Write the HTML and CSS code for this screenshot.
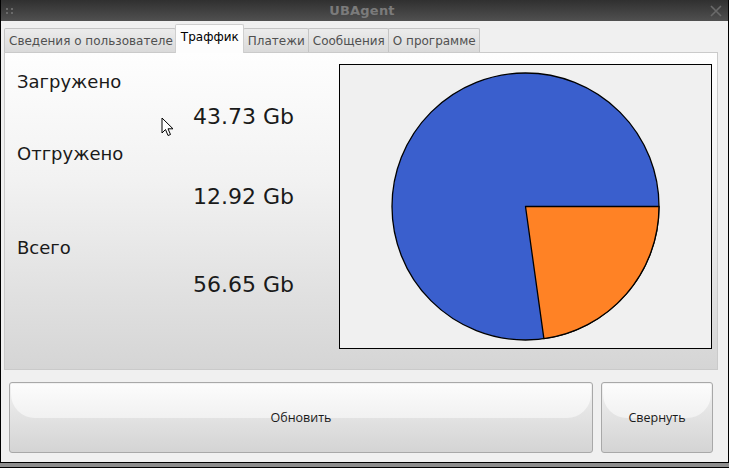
FILE: index.html
```html
<!DOCTYPE html>
<html>
<head>
<meta charset="utf-8">
<link rel="stylesheet" href="styles.css">
</head>
<body>
<div class="window">
  <div class="titlebar">
    <span class="grip"><i></i><i></i><i></i><i></i></span>
    <span class="title">UBAgent</span>
    <span class="close">
      <svg width="12" height="12" viewBox="0 0 12 12"><path d="M1 1 L11 11 M11 1 L1 11" stroke="#6a6a6a" stroke-width="1.6" fill="none"/></svg>
    </span>
  </div>
  <div class="body">
    <div class="tabs">
      <div class="tab">Сведения о пользователе</div>
      <div class="tab active">Траффик</div>
      <div class="tab">Платежи</div>
      <div class="tab">Сообщения</div>
      <div class="tab">О программе</div>
    </div>
    <div class="pane">
      <div class="stats">
        <div class="label l1">Загружено</div>
        <div class="value v1">43.73 Gb</div>
        <div class="label l2">Отгружено</div>
        <div class="value v2">12.92 Gb</div>
        <div class="label l3">Всего</div>
        <div class="value v3">56.65 Gb</div>
      </div>
      <div class="chart">
        <svg width="371" height="283" viewBox="0 0 371 283">
          <circle cx="185.5" cy="141.5" r="133.5" fill="#3a5fcd" stroke="#000" stroke-width="1.3"/>
          <path d="M185.5 141.5 L319 141.5 A133.5 133.5 0 0 1 203.9 273.7 Z" fill="#ff8225" stroke="#000" stroke-width="1.3" stroke-linejoin="round"/>
        </svg>
      </div>
      <svg class="cursor" width="14" height="21" viewBox="0 0 14 21">
        <path d="M1 1 L1 16 L4.5 12.5 L7 18.5 L9.5 17.5 L7 11.8 L12 11.8 Z" fill="#fff" stroke="#000" stroke-width="1" stroke-linejoin="round"/>
      </svg>
    </div>
    <div class="buttons">
      <button class="btn wide"><span>Обновить</span></button>
      <button class="btn narrow"><span>Свернуть</span></button>
    </div>
  </div>
  <div class="bottom"></div>
</div>
</body>
</html>
```

FILE: styles.css
```css
html, body {
  margin: 0;
  padding: 0;
  background: #f0f0f0;
}
.window {
  width: 729px;
  height: 468px;
  box-sizing: border-box;
  display: flex;
  flex-direction: column;
  font-family: "DejaVu Sans", sans-serif;
  overflow: hidden;
}
.titlebar {
  height: 21px;
  flex: none;
  background: linear-gradient(#303030, #505050);
  display: flex;
  align-items: center;
  justify-content: space-between;
  padding: 0 6px 0 5px;
  border-left: 1px solid #000;
  border-right: 1px solid #000;
  box-sizing: border-box;
}
.grip {
  width: 8px;
  display: grid;
  grid-template-columns: 3px 3px;
  gap: 2px;
}
.grip i {
  display: block;
  width: 2px;
  height: 2px;
  background: #6a6a6a;
}
.title {
  color: #7b7b7b;
  font-weight: bold;
  font-size: 13px;
  letter-spacing: 0.2px;
}
.close {
  display: flex;
  width: 12px;
  height: 12px;
}
.body {
  flex: 1;
  border-left: 1px solid #000;
  border-right: 1px solid #000;
  background: #f0f0f0;
  display: flex;
  flex-direction: column;
  padding: 3px 10px 0 3px;
}
.tabs {
  display: flex;
  align-items: flex-end;
  height: 28px;
  position: relative;
  z-index: 2;
}
.tab {
  height: 24px;
  box-sizing: border-box;
  border: 1px solid #c4c4c4;
  border-bottom: none;
  border-radius: 2px 2px 0 0;
  background: linear-gradient(#ececec, #dadada);
  color: #505050;
  font-size: 12px;
  padding: 0 3px 0 4px;
  display: flex;
  align-items: center;
  margin-right: -1px;
  white-space: nowrap;
}
.tab:first-child {
  padding: 0 2px 0 4px;
}
.tab.active {
  height: 29px;
  background: #fdfdfd;
  color: #000;
  border-color: #cfcfcf;
  padding: 0 4px 4px 5px;
  margin-bottom: -1px;
  position: relative;
  z-index: 3;
}
.pane {
  height: 318px;
  box-sizing: border-box;
  border: 1px solid #cacaca;
  background: linear-gradient(#fefefe 0%, #f2f2f2 40%, #d5d5d5 100%);
  display: flex;
  padding: 11px 0 0 12px;
  position: relative;
}
.stats {
  width: 322px;
  position: relative;
}
.label {
  font-size: 18px;
  color: #1a1a1a;
  height: 22px;
  line-height: 22px;
}
.value {
  font-size: 22px;
  color: #1a1a1a;
  padding-left: 176px;
  height: 26px;
  line-height: 26px;
}
.l1 { margin-top: 7px; }
.v1 { margin-top: 11px; }
.l2 { margin-top: 13px; }
.v2 { margin-top: 19px; }
.l3 { margin-top: 27px; }
.v3 { margin-top: 13px; }
.chart {
  width: 373px;
  height: 285px;
  box-sizing: border-box;
  border: 1px solid #000;
  background: #f0f0f0;
}
.chart svg {
  display: block;
}
.cursor {
  position: absolute;
  left: 156px;
  top: 64px;
}
.buttons {
  display: flex;
  gap: 8px;
  margin-top: 12px;
  padding-left: 5px;
}
.btn {
  height: 71px;
  box-sizing: border-box;
  border: 1px solid #a8a8a8;
  border-radius: 3px;
  background: linear-gradient(#f1f1f1, #d4d4d4);
  font-family: "Open Sans", sans-serif;
  font-size: 12.5px;
  color: #1a1a1a;
  position: relative;
  overflow: hidden;
  padding: 0;
}
.btn::before {
  content: "";
  position: absolute;
  left: 1px;
  right: 1px;
  top: 1px;
  height: 34px;
  border-radius: 0 0 24px 24px;
  background: linear-gradient(#fcfcfc, #f1f1f1);
}
.btn span {
  position: relative;
  z-index: 1;
}
.wide {
  width: 584px;
}
.narrow {
  width: 112px;
}
.bottom {
  height: 6px;
  flex: none;
  border-top: 1px solid #000;
  border-bottom: 1px solid #000;
  background: #8c8c8c;
  box-sizing: border-box;
}
```
